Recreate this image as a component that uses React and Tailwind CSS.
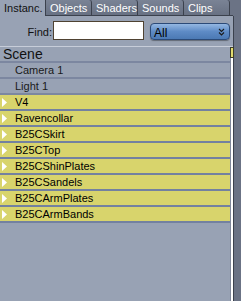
import React from "react";

const tabs = ["Objects", "Shaders", "Sounds", "Clips"];
const yellowRows = [
  "V4",
  "Ravencollar",
  "B25CSkirt",
  "B25CTop",
  "B25CShinPlates",
  "B25CSandels",
  "B25CArmPlates",
  "B25CArmBands",
];

function Tri() {
  return (
    <svg width="5" height="9" viewBox="0 0 5 9" className="shrink-0">
      <polygon points="0,0 5,4.5 0,9" fill="#ffffff" />
    </svg>
  );
}

export default function App() {
  return (
    <div
      className="w-[241px] h-[301px] bg-[#6b7385] flex flex-col overflow-hidden text-[#111]"
      style={{ fontFamily: '"Liberation Sans", Arial, sans-serif' }}
    >
      {/* tab bar */}
      <div className="flex h-[16px] shrink-0">
        <div className="w-[46px] h-[16px] bg-[#98a2b4] text-[11px] leading-[16px] pl-[4px] text-[#111] border-r border-[#3b414d]">
          Instanc.
        </div>
        {tabs.map((t) => (
          <div
            key={t}
            className="w-[46px] h-[16px] bg-gradient-to-b from-[#7a8395] to-[#687183] text-white text-[11px] leading-[16px] pl-[4px] border-r border-b border-[#3b414d] rounded-tr-[3px]"
          >
            {t}
          </div>
        ))}
        <div className="flex-1 border-b border-[#3b414d] w-[3px] max-w-[3px]" />
      </div>

      <div className="flex flex-1">
        <div className="w-[234px] bg-[#98a2b4] border-r border-[#3b414d] flex flex-col">
          {/* find row */}
          <div className="h-[30px] flex items-start shrink-0">
            <div className="w-[53px] text-right pr-[1px] text-[11px] leading-[12px] mt-[10px] text-[#111]">
              Find:
            </div>
            <div className="w-[91px] h-[19px] mt-[5px] bg-white border border-[#4f4232]" />
            <div className="ml-[6px] mt-[7px] w-[80px] h-[17px] rounded-[4px] border border-[#2b4a78] bg-gradient-to-b from-[#94b7e2] via-[#5e8bc6] to-[#4b79b4] flex items-center justify-between px-[3px] shadow-[0_1px_1px_rgba(0,0,0,0.35)]">
              <span className="text-[12px] leading-[12px] text-black mt-[2px]">All</span>
              <svg width="7" height="8" viewBox="0 0 7 8" className="mr-[1px]">
                <polyline points="1,1 3.5,3.5 6,1" fill="none" stroke="#1a1a1a" strokeWidth="1.1" />
                <polyline points="1,4.5 3.5,7 6,4.5" fill="none" stroke="#1a1a1a" strokeWidth="1.1" />
              </svg>
            </div>
          </div>

          {/* list + scrollbar */}
          <div className="flex flex-1 border-t border-[#c7cdd9]">
            <div className="w-[230px] flex flex-col">
              <div className="h-[16px] border-b-2 border-[#7c87a0] pl-[3px] text-[14px] leading-[14px] text-[#111]">
                Scene
              </div>
              {["Camera 1", "Light 1"].map((r) => (
                <div
                  key={r}
                  className="h-[16px] border-b-2 border-[#7c87a0] pl-[15px] text-[11px] leading-[14px] text-[#1a1a1a]"
                >
                  {r}
                </div>
              ))}
              {yellowRows.map((r) => (
                <div
                  key={r}
                  className="h-[16px] bg-[#d8d46c] border-b-2 border-[#7381a0] flex items-center"
                >
                  <div className="w-[15px] pl-[2px] flex items-center">
                    <Tri />
                  </div>
                  <span className="text-[11px] leading-[14px] text-black">{r}</span>
                </div>
              ))}
            </div>
            <div className="w-[3px] bg-white border-l border-[#7f879a] relative">
              <div className="absolute left-[-1px] top-0 w-[4px] h-[11px] bg-[#e2dc6e] border border-[#3d3d2a]" />
            </div>
          </div>
        </div>
        <div className="flex-1" />
      </div>
    </div>
  );
}
